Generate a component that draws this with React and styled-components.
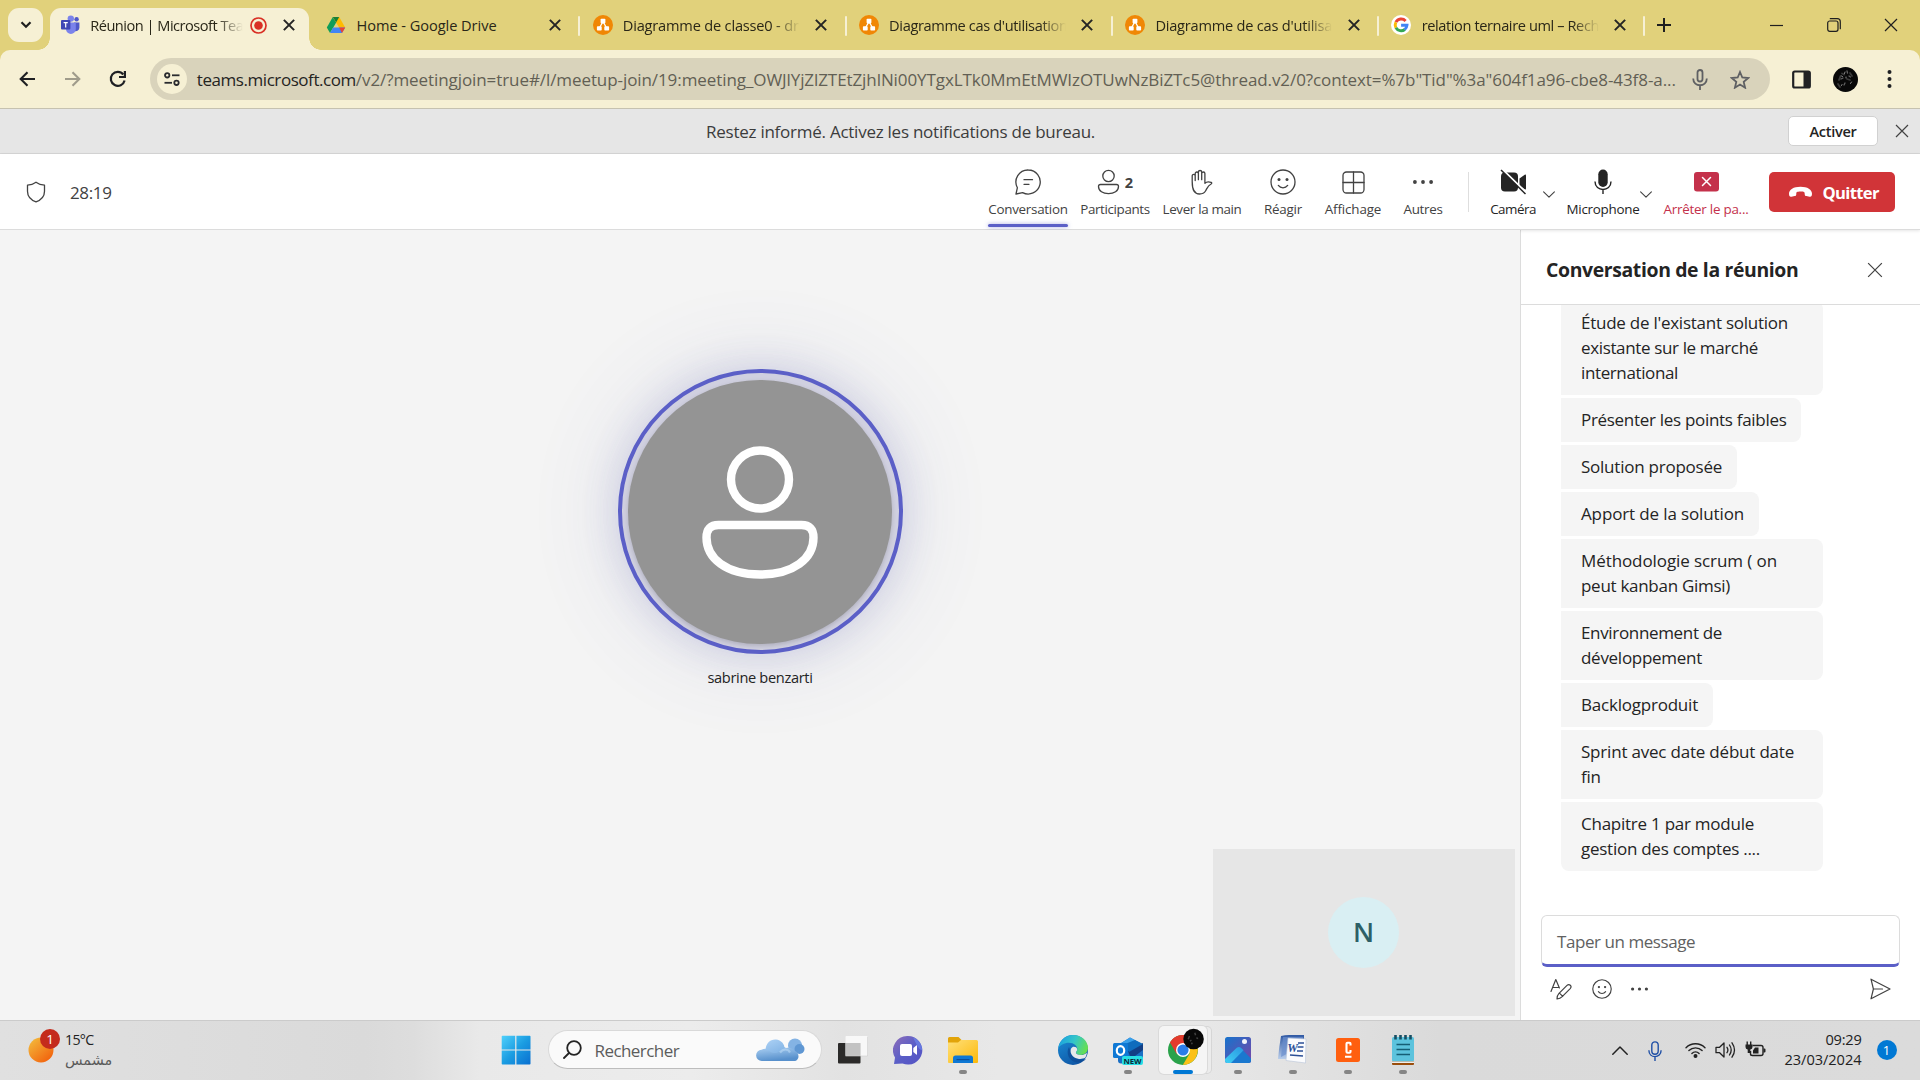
import React from 'react';
import styled, { createGlobalStyle } from 'styled-components';

const GlobalStyle = createGlobalStyle`
  * { box-sizing: border-box; }
  body { margin: 0; overflow: hidden; font-family: "Open Sans", "Noto Sans", sans-serif; color: #242424; }
  svg { display: block; flex: none; }
  button { font: inherit; color: inherit; border: 0; background: none; padding: 0; margin: 0; }
`;

const Screen = styled.div`
  width: 1920px;
  height: 1080px;
  display: flex;
  flex-direction: column;
  overflow: hidden;
  background: #fff;
`;

const Text = styled.span`
  white-space: pre;
  font-size: ${(p) => p.$size || 17}px;
  font-weight: ${(p) => p.$weight || 400};
  letter-spacing: ${(p) => p.$track || 0}px;
  color: ${(p) => p.$color || 'inherit'};
`;

/* ---------- Browser chrome ---------- */

const TabStrip = styled.div`
  height: 50px;
  flex: none;
  display: flex;
  background: #e1d17b;
  padding-left: 8px;
`;

const TabSearch = styled.button`
  width: 35px;
  height: 34px;
  margin: 8px 7px 0 0;
  border-radius: 11px;
  background: #f6f0d4;
  display: grid;
  place-items: center;
`;

const TabBox = styled.div`
  position: relative;
  width: 259px;
  flex: none;
  height: 42.5px;
  margin: 7.5px 7.3px 0 0;
  padding: 0 0 7px 10px;
  display: flex;
  align-items: center;
  border-radius: 11px 11px 0 0;
  background: ${(p) => (p.$active ? '#f6f0d4' : 'transparent')};
  ${(p) => p.$active && `
    &::before, &::after {
      content: '';
      position: absolute;
      bottom: 0;
      width: 12px;
      height: 12px;
    }
    &::before { left: -12px; background: radial-gradient(circle at 0 0, transparent 11.5px, #f6f0d4 12px); }
    &::after { right: -12px; background: radial-gradient(circle at 100% 0, transparent 11.5px, #f6f0d4 12px); }
  `}
`;

const TabIcon = styled.span`
  width: 20px;
  flex: none;
  margin-right: 10.2px;
  display: grid;
  place-items: center;
`;

const TabTitle = styled.span`
  width: ${(p) => (p.$active ? 152.5 : 177)}px;
  flex: none;
  margin-right: ${(p) => (p.$active ? 7 : 0)}px;
  line-height: 22px;
  white-space: pre;
  font-size: 14.6px;
  letter-spacing: ${(p) => p.$track}px;
  color: #2a2718;
  mask-image: ${(p) => (p.$fade ? 'linear-gradient(90deg, #000 calc(100% - 26px), transparent 100%)' : 'none')};
`;

const TabClose = styled.span`
  width: 12px;
  margin-left: auto;
  margin-right: 14.5px;
`;

const TabDivider = styled.span`
  width: 2px;
  height: 20px;
  flex: none;
  margin: 15.5px 0 0 -4.3px;
  background: #f6f0d4;
  border-radius: 1px;
`;

const TabGroup = styled.div`
  display: flex;
  width: 266.3px;
  flex: none;
`;

const WindowButtons = styled.div`
  margin-left: auto;
  display: flex;
  height: 50px;
  align-items: center;
  padding-right: 1px;
`;

const WindowButton = styled.button`
  width: 57px;
  height: 48px;
  display: grid;
  place-items: center;
`;

const NewTab = styled.button`
  width: 30px;
  height: 50px;
  margin-left: 1px;
  display: grid;
  place-items: center;
`;

const AddressRow = styled.div`
  background: #e1d17b;
  flex: none;
`;

const AddressBar = styled.div`
  height: 58px;
  border-radius: 10px 10px 0 0;
  background: #f6f0d4;
  display: flex;
  align-items: center;
  padding-left: 5px;
`;

const NavButton = styled.button`
  width: 45px;
  height: 40px;
  flex: none;
  display: grid;
  place-items: center;
`;

const Omnibox = styled.div`
  width: 1620px;
  height: 42px;
  flex: none;
  margin-left: 10px;
  border-radius: 21px;
  background: #d9d3bb;
  display: flex;
  align-items: center;
  padding-left: 6.5px;
`;

const SiteInfo = styled.span`
  width: 30px;
  height: 30px;
  flex: none;
  margin-right: 10.3px;
  border-radius: 50%;
  background: #f6f0d4;
  display: grid;
  place-items: center;
`;

const UrlText = styled.span`
  width: 1483px;
  flex: none;
  white-space: pre;
  line-height: 26px;
  padding-top: 1px;
`;

const OmniIcon = styled.span`
  width: 40px;
  display: grid;
  place-items: center;
`;

const BarIcon = styled.button`
  width: ${(p) => p.$w}px;
  height: 40px;
  display: grid;
  place-items: center;
`;

/* ---------- Teams ---------- */

const NoticeBar = styled.div`
  height: 46px;
  flex: none;
  display: grid;
  grid-template-columns: 1fr auto 25px;
  align-items: center;
  background: #e6e6e6;
  border-top: 1px solid #c6c2b0;
  border-bottom: 1px solid #d6d6d6;
`;

const NoticeText = styled.div`
  padding: 2px 0 0 706px;
  line-height: 24px;
  color: #3c3c3c;
`;

const NoticeButton = styled.button`
  width: 90px;
  height: 30px;
  margin-right: 17px;
  border: 1px solid #d1d1d1;
  border-radius: 5px;
  background: #fff;
  line-height: 28px;
`;

const MeetingBar = styled.div`
  height: 76px;
  flex: none;
  display: flex;
  background: #fff;
  border-bottom: 1px solid #dcdcdc;
  box-shadow: 0 1px 3px rgba(0, 0, 0, 0.1);
  position: relative;
`;

const CallInfo = styled.div`
  width: 976px;
  height: 76px;
  padding-left: 25.5px;
  display: flex;
  align-items: center;
  gap: 24.5px;
  color: #424242;
`;

const Action = styled.button`
  width: ${(p) => p.$w}px;
  height: 74px;
  margin-left: ${(p) => (p.$gap === undefined ? 12 : p.$gap)}px;
  flex: none;
  display: grid;
  grid-template-rows: 26px 20px 5px;
  padding-top: 15px;
  row-gap: 4px;
  line-height: 20px;
  align-content: start;
  justify-items: center;
  color: ${(p) => p.$color || '#424242'};
`;

const ActionIcon = styled.span`
  height: 26px;
  display: flex;
  align-items: center;
  gap: 5px;
`;

const ActiveLine = styled.span`
  width: 80px;
  height: 3px;
  margin-top: 1px;
  border-radius: 2px;
  background: #5b5fc7;
  box-shadow: 0 0 4px rgba(91, 95, 199, 0.55);
`;

const ActionDivider = styled.span`
  width: 1px;
  height: 40px;
  margin: 18px 0 0 16px;
  background: #dedede;
`;

const Caret = styled.button`
  width: 12px;
  height: 7px;
  margin: 37px 0 0 ${(p) => p.$gap}px;
`;

const LeaveButton = styled.button`
  width: 126px;
  height: 40px;
  margin: 18px 0 0 20px;
  padding-left: 18.5px;
  display: flex;
  align-items: center;
  gap: 10px;
  border-radius: 5px;
  background: #d13438;
  color: #fff;
`;

const Body = styled.div`
  flex: 1;
  display: flex;
  min-height: 0;
`;

const Stage = styled.main`
  position: relative;
  width: 1520px;
  background: #f4f4f4;
  display: flex;
  flex-direction: column;
  align-items: center;
  padding-top: 139px;
`;

const SpeakerRing = styled.div`
  width: 285px;
  height: 285px;
  border-radius: 50%;
  border: 4px solid #5b5fc7;
  background: #d0d0e0;
  display: grid;
  place-items: center;
  box-shadow: 0 0 36px rgba(80, 84, 170, 0.17), 0 0 90px rgba(80, 84, 160, 0.16);
`;

const SpeakerAvatar = styled.div`
  width: 264px;
  height: 264px;
  border-radius: 50%;
  background: #949494;
  box-shadow: 0 2px 5px rgba(0, 0, 0, 0.16);
  display: grid;
  place-items: center;
`;

const SpeakerName = styled.div`
  margin-top: 12px;
  line-height: 22px;
`;

const SelfTile = styled.div`
  position: absolute;
  right: 5px;
  bottom: 4px;
  width: 302px;
  height: 167px;
  background: #e6e6e6;
  display: grid;
  place-items: center;
`;

const SelfAvatar = styled.div`
  width: 71px;
  height: 71px;
  margin-right: 1px;
  border-radius: 50%;
  background: #d9eff3;
  color: #2d5f66;
  font-size: 27px;
  font-weight: 600;
  line-height: 69px;
  text-align: center;
`;

const Chat = styled.aside`
  flex: 1;
  display: flex;
  flex-direction: column;
  background: #fff;
  border-left: 1px solid #dcdcdc;
`;

const ChatHeader = styled.header`
  height: 75px;
  flex: none;
  display: flex;
  align-items: center;
  padding: 5px 37px 0 25px;
  justify-content: space-between;
  border-bottom: 1px solid #dcdcdc;
`;

const MessageList = styled.div`
  flex: 1;
  min-height: 0;
  overflow: hidden;
  padding: 0 0 44px 40px;
  display: flex;
  flex-direction: column;
  justify-content: flex-end;
  align-items: flex-start;
  gap: 3px;
`;

const Bubble = styled.div`
  flex: none;
  min-width: ${(p) => p.$w}px;
  padding: 8.5px 15px 10.5px 20px;
  border-radius: 0 8px 8px ${(p) => (p.$last ? 8 : 0)}px;
  background: #f5f5f5;
  display: flex;
  flex-direction: column;
  line-height: 25px;
`;

const Composer = styled.div`
  height: 105px;
  flex: none;
  padding: 0 20px;
`;

const MessageInput = styled.div`
  height: 52px;
  width: 359px;
  padding: 0 15px;
  border: 1px solid #dcdcdc;
  border-bottom: 3px solid #5b5fc7;
  border-radius: 6px;
  line-height: 52px;
  color: #616161;
`;

const ComposerTools = styled.div`
  display: flex;
  align-items: center;
  height: 44px;
  padding: 0 9px 0 9px;
  gap: 19.5px;
  color: #424242;
`;

const SendButton = styled.button`
  margin-left: auto;
`;

/* ---------- Taskbar ---------- */

const Taskbar = styled.footer`
  height: 60px;
  flex: none;
  display: flex;
  border-top: 1px solid #cbcbcb;
  background: linear-gradient(90deg, #e0e0e0 0, #dadada 19%, #dddddd 21.5%, #e9e9e9 25%, #ececec 36%, #e2e2e2 44%, #e8e8e8 52%, #e8e8e8 62%, #dadada 75%, #dbdbdb 100%);
`;

const Weather = styled.div`
  width: 488px;
  padding: 7px 0 0 28px;
  display: flex;
  gap: 5px;
`;

const WeatherText = styled.div`
  display: flex;
  flex-direction: column;
  padding-top: 2px;
`;

const WeatherState = styled.span`
  font-family: "DejaVu Sans", sans-serif;
  font-size: 14.4px;
  line-height: 22px;
  color: #5a5a5a;
`;

const SearchPill = styled.div`
  width: 274px;
  height: 39px;
  margin: 9px 3px 0 5px;
  padding: 0 16px 0 14px;
  border-radius: 20px;
  background: #fafafa;
  border: 1px solid #d9d9d9;
  border-bottom-color: #bdbdbd;
  display: flex;
  align-items: center;
  color: #5c5c5c;
`;

const SearchLabel = styled.span`
  margin-left: 12.5px;
  padding-top: 2px;
  flex: 1;
  line-height: 24px;
`;

const AppCell = styled.div`
  width: 48px;
  height: 48px;
  margin: 5px 3.5px 0;
  padding-top: 8.5px;
  display: flex;
  flex-direction: column;
  align-items: center;
  gap: 5px;
  border-radius: 5px;
  background: ${(p) => (p.$active ? '#f5f5f5' : 'transparent')};
  box-shadow: ${(p) => (p.$active ? '0 0 0 1px #dadada, 5px 0 0 -1px #ececec, 5px 0 0 0 #d6d6d6' : 'none')};
`;

const RunMark = styled.span`
  width: ${(p) => (p.$active ? 20 : 8)}px;
  height: 4px;
  flex: none;
  border-radius: 2px;
  background: ${(p) => (p.$active ? '#0078d4' : '#858585')};
`;

const Tray = styled.div`
  margin-left: auto;
  width: 308px;
  display: flex;
  align-items: center;
`;

const TrayIcon = styled.span`
  margin: ${(p) => p.$rise || 0}px ${(p) => p.$gap}px 0 0;
`;

const Clock = styled.div`
  width: 96px;
  padding-bottom: 3px;
  display: flex;
  flex-direction: column;
  align-items: flex-end;
  line-height: 20px;
  color: #222;
`;

const NoticeCount = styled.span`
  width: 20px;
  height: 20px;
  margin: -2px 0 0 15px;
  border-radius: 50%;
  background: #0078d4;
  color: #fff;
  font-size: 13px;
  line-height: 20px;
  text-align: center;
`;

/* ---------- Icons ---------- */

const stroke = { fill: 'none', stroke: 'currentColor', strokeLinecap: 'round', strokeLinejoin: 'round' };

const Cross = ({ size, width = 1.2, color = '#242424' }) => (
  <svg width={size} height={size} viewBox="0 0 14 14">
    <path d="M1 1l12 12M13 1L1 13" stroke={color} strokeWidth={(width * 14) / size} />
  </svg>
);

const TeamsLogo = () => (
  <svg width="20" height="20" viewBox="0 0 20 20">
    <circle cx="16.6" cy="4.3" r="2.2" fill="#5059c9" />
    <path d="M14 7.5h5.4v5.2a3.6 3.6 0 0 1-5.4 3z" fill="#5059c9" />
    <circle cx="10.8" cy="3.6" r="3.2" fill="#7b83eb" />
    <path d="M6 7.5h9.8v6.6a4.9 4.9 0 0 1-9.8 0z" fill="#7b83eb" />
    <rect x="1" y="5" width="9.4" height="9.4" rx="1" fill="#4048b5" />
    <path d="M3.6 7.6h4.2M5.7 7.6v4.8" stroke="#fff" strokeWidth="1.2" />
  </svg>
);

const DriveLogo = () => (
  <svg width="20" height="18" viewBox="0 0 20 18">
    <path d="M6.8 1L.8 11.6 4 17l6.2-10.6z" fill="#0f9d58" />
    <path d="M6.8 1h6.4l6 10.6h-6.1z" fill="#ffba00" />
    <path d="M4 17l3.1-5.4h12.1L16 17z" fill="#4285f4" />
    <path d="M13.1 11.6h6.1L16 17z" fill="#ea4335" />
    <path d="M6.8 1h6.4L10.1 6.4z" fill="#188038" />
  </svg>
);

const DrawioLogo = () => (
  <svg width="20" height="20" viewBox="0 0 20 20">
    <circle cx="10" cy="10" r="10" fill="#f08705" />
    <path d="M10 6.5L6.4 13M10 6.5l3.6 6.5" stroke="#fff" strokeWidth="1.3" />
    <rect x="7.6" y="3.8" width="4.8" height="4.6" rx=".8" fill="#fff" />
    <rect x="3.9" y="11.2" width="4.8" height="4.4" rx=".8" fill="#fff" />
    <rect x="11.3" y="11.2" width="4.8" height="4.4" rx=".8" fill="#fff" />
  </svg>
);

const GoogleLogo = () => (
  <svg width="20" height="20" viewBox="0 0 20 20">
    <circle cx="10" cy="10" r="10" fill="#fff" />
    <g fill="none" strokeWidth="2.9">
      <path d="M14.6 5.9A6 6 0 0 0 4.9 7.2" stroke="#ea4335" />
      <path d="M4.9 7.2a6 6 0 0 0 0 5.6" stroke="#fbbc05" />
      <path d="M4.9 12.8a6 6 0 0 0 8.9 1.7" stroke="#34a853" />
      <path d="M13.6 14.6A6 6 0 0 0 16 10.2h-5.9" stroke="#4285f4" />
    </g>
  </svg>
);

const RecordIcon = () => (
  <svg width="17" height="17" viewBox="0 0 17 17">
    <circle cx="8.5" cy="8.5" r="7.5" fill="none" stroke="#d93025" strokeWidth="1.7" />
    <circle cx="8.5" cy="8.5" r="4.3" fill="#d93025" />
  </svg>
);

const SmileIcon = ({ size }) => (
  <svg width={size} height={size} viewBox="0 0 26 26" {...stroke} strokeWidth={size > 22 ? 1.3 : 1.5}>
    <circle cx="13" cy="13" r="12" />
    <path d="M8.3 16.4c2.4 3.2 7 3.2 9.4 0" />
    <circle cx="9" cy="10.5" r="1.5" fill="currentColor" stroke="none" />
    <circle cx="17" cy="10.5" r="1.5" fill="currentColor" stroke="none" />
  </svg>
);

const DotsIcon = ({ w, r }) => (
  <svg width={w} height="6" viewBox={`0 0 ${w} 6`} fill="currentColor">
    <circle cx={r} cy="3" r={r} />
    <circle cx={w / 2} cy="3" r={r} />
    <circle cx={w - r} cy="3" r={r} />
  </svg>
);

const CaretIcon = () => (
  <svg width="12" height="7" viewBox="0 0 12 7" {...stroke} strokeWidth="1.1" color="#424242">
    <path d="M.6.8L6 6.2 11.4.8" />
  </svg>
);

const ProfilePhoto = ({ size }) => (
  <svg width={size} height={size} viewBox="0 0 25 25">
    <circle cx="12.5" cy="12.5" r="12.5" fill="#080808" />
    <g fill="none" strokeLinecap="round">
      <path d="M6 13l1.500-4M9 6.500l2 1M5 17l2 3M17 6l2 3M14 12l3 1" stroke="#3a3a3a" strokeWidth="1.800" />
      <path d="M8 12l2-1M14 4l.5 2M16 9l1.500 1M11 18l1-2" stroke="#626262" strokeWidth="1.300" />
      <path d="M12 5l-.5 1.500M8.500 9l1 .5M18.500 15l-1 1.500M9 17.500l-.5 1M13 10v1" stroke="#9a9a9a" strokeWidth=".9" />
    </g>
  </svg>
);

const MicTray = () => (
  <svg width="14" height="20" viewBox="0 0 14 20" fill="none" stroke="#1f4fa5" strokeWidth="1.4">
    <rect x="3.8" y=".9" width="6.4" height="12.4" rx="3.2" />
    <path d="M.9 9.2c0 8.6 12.2 8.6 12.2 0M7 15.8V20" />
  </svg>
);

const WindowsLogo = () => (
  <svg width="30" height="30" viewBox="0 0 30 30">
    <defs>
      <linearGradient id="win" x1="0" y1="0" x2="1" y2="1" gradientUnits="objectBoundingBox">
        <stop offset="0" stopColor="#4fd0fb" />
        <stop offset=".5" stopColor="#1b9de2" />
        <stop offset="1" stopColor="#0a6fd0" />
      </linearGradient>
    </defs>
    <path fill="url(#win)" d="M1.5.8h12.7v13.7H.7V1.6q0-.8.8-.8zM15.4.8h13.3q.8 0 .8.8v12.9H15.4zM.7 15.6h13.5v13.9H1.5q-.8 0-.8-.8zM15.4 15.6h14.1v13.1q0 .8-.8.8H15.4z" />
  </svg>
);

const CloudArt = () => (
  <svg width="50" height="24" viewBox="0 0 50 24">
    <defs>
      <linearGradient id="cloud" x1="0" y1="0" x2="0.3" y2="1">
        <stop offset="0" stopColor="#b5d7f7" />
        <stop offset="1" stopColor="#5790cc" />
      </linearGradient>
      <linearGradient id="cloudTop" x1="0" y1="0" x2="0.6" y2="1">
        <stop offset="0" stopColor="#acd1f5" />
        <stop offset="1" stopColor="#86b6e6" />
      </linearGradient>
    </defs>
    <circle cx="40" cy="7.5" r="7" fill="#84b3e4" />
    <circle cx="44.500" cy="11" r="5" fill="#5f97d3" />
    <path d="M7 23a5.600 5.600 0 0 1-.5-11.200C8 10.800 10 10.600 12 11 18 8 26 6 31 10c4-1 7 1 8 3 6 .5 6 10 0 10z" fill="url(#cloud)" />
    <path d="M10.500 12c.5-7 5-11 10.500-10.500 5 .4 9 4.600 8.500 9.500-5 1-6 4.500-10 4-4-.4-5-2.500-9-3z" fill="url(#cloudTop)" />
    <path d="M25 14.500c3-4 8-4 10 0" stroke="#b9d8f5" strokeWidth="2.200" fill="none" opacity=".6" />
  </svg>
);

const TaskViewIcon = () => (
  <svg width="30" height="30" viewBox="0 0 30 30">
    <rect x="0" y="8" width="22.500" height="20.500" rx="1" fill="#2b2a29" />
    <rect x="7.500" y="1" width="22" height="20" rx="1" fill="#fafafa" opacity=".92" />
    <path d="M7.500 8h15v13h-15z" fill="#c2c2c2" />
    <path d="M29.500 2v19h-22" fill="none" stroke="#d0d0d0" strokeWidth=".6" />
  </svg>
);

const ChatIcon = () => (
  <svg width="30" height="30" viewBox="0 0 30 30">
    <defs>
      <linearGradient id="chat" x1="0" y1="0" x2="1" y2="1">
        <stop offset="0" stopColor="#8f6db8" />
        <stop offset=".5" stopColor="#5b5fc7" />
        <stop offset="1" stopColor="#5351c4" />
      </linearGradient>
    </defs>
    <path d="M15 1a14.300 14.300 0 1 1-5.500 27.500L1 29l1-6.500A14.300 14.300 0 0 1 15 1z" fill="url(#chat)" />
    <path d="M20 2.200A14 14 0 0 1 29.300 15c-3 1-6-6-9.300-12.800z" fill="#6f8cf0" opacity=".6" />
    <rect x="7" y="9" width="12" height="12" rx="2" fill="#fff" />
    <path d="M20.300 13l3-2.600q.7-.4.7.4v8.400q0 .8-.7.4l-3-2.600z" fill="#fff" />
  </svg>
);

const ExplorerIcon = () => (
  <svg width="30" height="30" viewBox="0 0 30 30">
    <defs>
      <linearGradient id="folder" x1="0" y1="0" x2="1" y2="1">
        <stop offset="0" stopColor="#ffe07a" />
        <stop offset="1" stopColor="#fcb90a" />
      </linearGradient>
    </defs>
    <path d="M0 3.500Q0 2 1.500 2h9l3 3H28v8H0z" fill="#e2a40a" />
    <path d="M0 7.500h10L13 5h15.500Q30 5 30 6.500V27q0 1-1 1H1q-1 0-1-1z" fill="url(#folder)" />
    <path d="M5 28v-5q0-2.500 2.500-2.500h15Q25 20.500 25 23v5z" fill="#0f78d4" />
    <path d="M8.500 24.600h13" stroke="#0b4f9c" strokeWidth="1.200" />
  </svg>
);

const EdgeIcon = () => (
  <svg width="30" height="30" viewBox="0 0 30 30">
    <defs>
      <linearGradient id="edgeTop" x1="0" y1=".3" x2="1" y2=".6">
        <stop offset="0" stopColor="#1ba1e0" />
        <stop offset=".5" stopColor="#34c6c8" />
        <stop offset="1" stopColor="#68e04c" />
      </linearGradient>
      <linearGradient id="edgeLow" x1="0" y1="0" x2=".6" y2="1">
        <stop offset="0" stopColor="#1b8fd8" />
        <stop offset="1" stopColor="#0f56a5" />
      </linearGradient>
    </defs>
    <circle cx="15" cy="15" r="15" fill="url(#edgeLow)" />
    <path d="M.2 13.500C1.500 5 8 0 15 0c8.500 0 15 6 15 12.800 0 4.500-3.500 7.200-7 7.200-3.500 0-5-1.500-5-2.600 0-.9 1.300-1.300 1.300-3.400 0-3-3.300-6.200-8.300-6.200C6 7.800 1.800 10.300.2 13.500z" fill="url(#edgeTop)" />
    <path d="M11 12c-3.500 6 0 14.500 8 15.500 4 .3 7-1 9-3.500C22 26.500 13 23 12.600 16z" fill="#0d4a94" opacity=".75" />
    <path d="M12.600 16c0-2 1-3.600 2.400-4.200 2-.3 4 .5 4.200 2.400 0 1.800-1.300 2.300-1.300 3.300 0 1.200 1.500 2.600 5 2.600 2.700 0 4.900-1.200 6-2.600-.2 2-.6 3.300-1.500 5-1.800 1.200-4 1.600-6.400 1.400-5-.5-8.400-4-8.400-7.900z" fill="#e6e8ea" />
  </svg>
);

const OutlookIcon = () => (
  <svg width="30" height="30" viewBox="0 0 30 30">
    <path d="M5 10L17 2.500 30 9.500v16q0 3-3 3H8q-3 0-3-3z" fill="#1a6fc4" />
    <path d="M5 10L17 2.500l6 3L9 13z" fill="#3aa0ea" />
    <path d="M15 16L30 8v7l-12 9z" fill="#123f86" />
    <path d="M12 9l10-4 8 4-14 8z" fill="#0f6cbd" />
    <rect x="0" y="8" width="15" height="15" rx="1.500" fill="#0f78d4" />
    <ellipse cx="7.500" cy="15.500" rx="3.700" ry="4.300" fill="none" stroke="#fff" strokeWidth="2.200" />
    <rect x="9" y="21" width="21" height="9" rx="2" fill="#27dfe4" />
    <text x="19.500" y="28.600" fontSize="7.800" fontWeight="700" fontFamily="Open Sans" textAnchor="middle" fill="#0c2b3a">NEW</text>
  </svg>
);

const ChromeIcon = () => (
  <svg width="36" height="30" viewBox="-3 0 36 30" overflow="visible">
    <circle cx="15" cy="15" r="15" fill="#2aa24a" />
    <path d="M15 15L2 7.500A15 15 0 0 1 28 7.500z" fill="#e33b2e" />
    <path d="M2 7.500L8.500 18.800 15 15V8H28A15 15 0 0 0 2 7.500z" fill="#e33b2e" />
    <path d="M28 7.800A15 15 0 0 1 14.800 30l6.700-11.300L20 8z" fill="#fbc116" />
    <circle cx="15" cy="15" r="7" fill="#fff" />
    <circle cx="15" cy="15" r="5.600" fill="#2b7de9" />
    <g transform="translate(15.300 -6.300) scale(.82)">
      <circle cx="12.500" cy="12.500" r="12.500" fill="#080808" />
      <path d="M6 13l1.500-4M14 5l1 3M16 11l2 1M10 19l1-2M8 15l2-1" stroke="#404040" strokeWidth="1.800" fill="none" />
    </g>
  </svg>
);

const PhotosIcon = () => (
  <svg width="30" height="30" viewBox="0 0 30 30">
    <defs>
      <linearGradient id="photo" x1="0" y1="0" x2="1" y2="1">
        <stop offset="0" stopColor="#1673cc" />
        <stop offset="1" stopColor="#7a45a8" />
      </linearGradient>
      <linearGradient id="peak" x1="0" y1="1" x2="1" y2="0">
        <stop offset="0" stopColor="#3fd0f5" />
        <stop offset="1" stopColor="#2a96e0" />
      </linearGradient>
      <clipPath id="photoClip"><rect x="2" y="2" width="26" height="26" rx="2.500" /></clipPath>
    </defs>
    <g clipPath="url(#photoClip)">
      <rect x="2" y="2" width="26" height="26" fill="url(#photo)" />
      <path d="M5 28l8.500-14.500q2.500-2 4.700 0L29 24.500V28z" fill="#1a78cf" />
      <path d="M2 24l11.500-11q2.500-2 4.700 0l2.300 2.300L8 28H2z" fill="url(#peak)" />
    </g>
    <circle cx="21.500" cy="6.500" r="2.500" fill="#f2f4fb" />
  </svg>
);

const WordIcon = () => (
  <svg width="30" height="30" viewBox="0 0 30 30">
    <defs>
      <linearGradient id="word" x1="0" y1="0" x2="0" y2="1">
        <stop offset="0" stopColor="#2f58a3" />
        <stop offset="1" stopColor="#b9cdea" />
      </linearGradient>
    </defs>
    <path d="M3 1q4-1 8-1h15v24H0Q1 12 3 1z" fill="url(#word)" />
    <path d="M5 2h20v8L3 22z" fill="#6b8fcd" opacity=".7" />
    <path d="M10 3l18 1-.5 24L8 25.500z" fill="#fafbfd" stroke="#b9c4d8" strokeWidth=".6" />
    <path d="M20 8h6M19.500 12h6M19 16h6M12 20l13 1" stroke="#2b4f96" strokeWidth="1.700" />
    <text x="14.500" y="16.500" fontSize="12" fontWeight="700" fontStyle="italic" fontFamily="Liberation Serif" textAnchor="middle" fill="#2b4f96">W</text>
  </svg>
);

const CalameoIcon = () => (
  <svg width="30" height="30" viewBox="0 0 30 30">
    <rect x="3" y="3" width="24" height="24" rx="2.500" fill="#ff5f0f" />
    <path d="M17.500 10.500V8.700q0-1-1-1h-2q-1 0-1 1v8.100q0 1 1 1h2q1 0 1-1V15M12 21.700h6.500" fill="none" stroke="#fff" strokeWidth="2.100" />
  </svg>
);

const NotepadIcon = () => (
  <svg width="30" height="30" viewBox="0 0 30 30">
    <rect x="4" y="26" width="22" height="4" rx="1" fill="#9a4d0b" />
    <rect x="4" y="2" width="22" height="24.500" rx="1.500" fill="#5cc3dd" />
    <path d="M4 26.500h22V28H4z" fill="#eee" />
    <path d="M8.500 9.500h13.500M8.500 14.500h13.500M8.500 19.500h13.500" stroke="#155e75" strokeWidth="1.600" />
    <path d="M7.500 0v4.500M12.500 0v4.500M17.500 0v4.500M22.500 0v4.500" stroke="#164e63" strokeWidth="2.600" />
  </svg>
);

/* ---------- Data ---------- */

const tabs = [
  { title: 'Réunion | Microsoft Tea', track: -0.5, icon: TeamsLogo, active: true },
  { title: 'Home - Google Drive', track: -0.05, icon: DriveLogo, plain: true },
  { title: 'Diagramme de classe0 - dr', track: -0.19, icon: DrawioLogo },
  { title: "Diagramme cas d'utilisation", track: -0.36, icon: DrawioLogo },
  { title: "Diagramme de cas d'utilisa", track: -0.22, icon: DrawioLogo },
  { title: 'relation ternaire uml – Rech', track: -0.4, icon: GoogleLogo },
];

const messages = [
  { w: 262, lines: [["Étude de l'existant solution", -0.25], ['existante sur le marché', -0.36], ['international', -0.38]] },
  { w: 240, lines: [['Présenter les points faibles', -0.3]] },
  { w: 176, lines: [['Solution proposée', -0.24]] },
  { w: 198, lines: [['Apport de la solution', -0.13]] },
  { w: 262, lines: [['Méthodologie scrum ( on', -0.09], ['peut kanban Gimsi)', -0.285]] },
  { w: 262, lines: [['Environnement de', -0.335], ['développement', -0.28]] },
  { w: 152, lines: [['Backlogproduit', -0.215]] },
  { w: 262, lines: [['Sprint avec date début date', -0.2], ['fin', -0.2]] },
  { w: 262, lines: [['Chapitre 1 par module', -0.25], ['gestion des comptes ....', -0.26]], last: true },
];

const apps = [
  { icon: TaskViewIcon }, { icon: ChatIcon }, { icon: ExplorerIcon, running: true }, {},
  { icon: EdgeIcon }, { icon: OutlookIcon, running: true }, { icon: ChromeIcon, running: true, active: true },
  { icon: PhotosIcon, running: true }, { icon: WordIcon, running: true },
  { icon: CalameoIcon, running: true }, { icon: NotepadIcon, running: true },
];

/* ---------- Sections ---------- */

function BrowserTab({ tab, divider }) {
  const Icon = tab.icon;
  return (
    <TabGroup>
      <TabBox $active={tab.active}>
        <TabIcon><Icon /></TabIcon>
        <TabTitle $active={tab.active} $track={tab.track} $fade={!tab.plain}>{tab.title}</TabTitle>
        {tab.active && <RecordIcon />}
        <TabClose><Cross size={12} width={2} /></TabClose>
      </TabBox>
      {divider && <TabDivider />}
    </TabGroup>
  );
}

function Browser() {
  return (
    <>
      <TabStrip>
        <TabSearch>
          <svg width="12" height="8" viewBox="0 0 12 8"><path d="M1.500 1.300L6 5.800l4.500-4.500" fill="none" stroke="#1f1f1f" strokeWidth="2.200" /></svg>
        </TabSearch>
        {tabs.map((tab, i) => <BrowserTab key={i} tab={tab} divider={i > 0} />)}
        <NewTab>
          <svg width="14" height="14" viewBox="0 0 14 14"><path d="M7 0v14M0 7h14" stroke="#1f1f1f" strokeWidth="2" /></svg>
        </NewTab>
        <WindowButtons>
          <WindowButton><svg width="13" height="13" viewBox="0 0 13 13"><path d="M0 6.500h13" stroke="#1f1f1f" strokeWidth="1.200" /></svg></WindowButton>
          <WindowButton>
            <svg width="14" height="14" viewBox="0 0 14 14" {...stroke} strokeWidth="1.200" color="#1f1f1f">
              <rect x=".7" y="3" width="10.300" height="10.300" rx="2" /><path d="M3.300.7h7q3 0 3 3v7" />
            </svg>
          </WindowButton>
          <WindowButton><Cross size={14} width={1.2} color="#1f1f1f" /></WindowButton>
        </WindowButtons>
      </TabStrip>
      <AddressRow>
        <AddressBar>
          <NavButton><svg width="17" height="16" viewBox="0 0 17 16"><path d="M16 8H2M8.500 1.200L1.700 8l6.800 6.800" fill="none" stroke="#1f2023" strokeWidth="2.100" /></svg></NavButton>
          <NavButton><svg width="17" height="16" viewBox="0 0 17 16"><path d="M1 8h14M8.500 1.200L15.300 8l-6.800 6.800" fill="none" stroke="#a09c8b" strokeWidth="2.100" /></svg></NavButton>
          <NavButton><svg width="18" height="18" viewBox="0 0 18 18"><path d="M15.600 10.500A7 7 0 1 1 14.300 4.500" fill="none" stroke="#1f2023" strokeWidth="2.200" /><path d="M17 1v7h-7V6h4.800V1z" fill="#1f2023" /></svg></NavButton>
          <Omnibox>
            <SiteInfo>
              <svg width="16" height="14" viewBox="0 0 16 14" fill="none" stroke="#2a2b2e" strokeWidth="1.800">
                <circle cx="3.200" cy="3.300" r="2.200" /><path d="M8 3.300h7.500" /><circle cx="12.500" cy="10.800" r="2.200" /><path d="M.5 10.800H8" />
              </svg>
            </SiteInfo>
            <UrlText>
              <Text $track={-0.44} $color="#25241f">teams.microsoft.com</Text>
              <Text $track={-0.082} $color="#625f54">/v2/?meetingjoin=true#/l/meetup-join/19:meeting_OWJlYjZlZTEtZjhlNi00YTgxLTk0MmEtMWIzOTUwNzBiZTc5@thread.v2/0?context=%7b"Tid"%3a"604f1a96-cbe8-43f8-a...</Text>
            </UrlText>
            <OmniIcon>
              <svg width="16" height="21" viewBox="0 0 16 21" fill="none" stroke="#5f6063" strokeWidth="1.800">
                <rect x="5.500" y="1" width="5" height="11.500" rx="2.500" /><path d="M1.200 9.500c0 9 13.600 9 13.600 0M8 16.300V21" />
              </svg>
            </OmniIcon>
            <OmniIcon>
              <svg width="20" height="19" viewBox="0 0 20 19"><path d="M10 2l2.300 5.500 5.900.5-4.500 3.900 1.400 5.800L10 14.600l-5.100 3.100 1.400-5.800L1.800 8l5.900-.5z" fill="none" stroke="#5f6063" strokeWidth="1.800" /></svg>
            </OmniIcon>
          </Omnibox>
          <BarIcon $w={64}>
            <svg width="19" height="19" viewBox="0 0 19 19"><rect x="1.200" y="1.500" width="16.600" height="16" rx="1.500" fill="none" stroke="#1f2023" strokeWidth="2.200" /><path d="M11.500 1h6.500v17h-6.500z" fill="#1f2023" /></svg>
          </BarIcon>
          <BarIcon $w={27}><ProfilePhoto size={25} /></BarIcon>
          <BarIcon $w={62}>
            <svg width="5" height="18" viewBox="0 0 5 18" fill="#1f2023"><circle cx="2.500" cy="2" r="2" /><circle cx="2.500" cy="9" r="2" /><circle cx="2.500" cy="16" r="2" /></svg>
          </BarIcon>
        </AddressBar>
      </AddressRow>
    </>
  );
}

const label = (text, track) => <Text $size={13.4} $track={track}>{text}</Text>;

function MeetingToolbar() {
  return (
    <MeetingBar>
      <CallInfo>
        <svg width="20" height="22" viewBox="0 0 20 22" {...stroke} strokeWidth="1.300"><path d="M10 1.200c2.600 2 5.300 2.700 8.500 2.900v6.100c0 5-3 8.600-8.500 10.600-5.500-2-8.500-5.600-8.500-10.600V4.100c3.200-.2 5.900-.9 8.500-2.900z" /></svg>
        <Text $track={-0.37}>28:19</Text>
      </CallInfo>
      <Action $w={80}>
        <ActionIcon>
          <svg width="26" height="26" viewBox="0 0 26 26" {...stroke} strokeWidth="1.300"><path d="M13.300 1A12 12 0 1 1 7.600 23.600L1 25l1.400-6.300A12 12 0 0 1 13.300 1zM9 10.700h8.500M9 15.300h5" /></svg>
        </ActionIcon>
        {label('Conversation', -0.26)}
        <ActiveLine />
      </Action>
      <Action $w={70}>
        <ActionIcon>
          <svg width="23" height="26" viewBox="0 0 23 26" {...stroke} strokeWidth="1.300"><circle cx="11.500" cy="7" r="5.700" /><path d="M3.500 15.500h16q2 0 2 2c0 4.500-4.500 7.200-10 7.200s-10-2.700-10-7.200q0-2 2-2z" /></svg>
          <Text $size={14.6} $weight={700}>2</Text>
        </ActionIcon>
        {label('Participants', -0.37)}
      </Action>
      <Action $w={80}>
        <ActionIcon>
          <svg width="22" height="26" viewBox="0 0 22 26" {...stroke} strokeWidth="1.300"><path d="M1.200 12.500V6.800c0-2 3-2 3 0v4.700-7c0-2 3.200-2 3.200 0v6.200V3c0-2 3.300-2 3.300 0v7.700V4.500c0-2 3.200-2 3.200 0v9.800c1.500-1.600 3.500-2 6.300-.9.800.4.600 1.300-.1 1.600-3.400 1.500-3.800 4-5.600 7-1.300 2.200-3 3-6 3-5 0-7.300-3.300-7.300-12.500z" /></svg>
        </ActionIcon>
        {label('Lever la main', -0.34)}
      </Action>
      <Action $w={58}><ActionIcon><SmileIcon size={26} /></ActionIcon>{label('Réagir', -0.22)}</Action>
      <Action $w={58}>
        <ActionIcon>
          <svg width="23" height="23" viewBox="0 0 23 23" {...stroke} strokeWidth="1.300"><rect x="1" y="1" width="21" height="21" rx="3.500" /><path d="M11.500 1v21M1 11.500h21" /></svg>
        </ActionIcon>
        {label('Affichage', -0.13)}
      </Action>
      <Action $w={58}><ActionIcon><DotsIcon w={20} r={1.9} /></ActionIcon>{label('Autres', -0.3)}</Action>
      <ActionDivider />
      <Action $w={58} $gap={15} $color="#242424">
        <ActionIcon>
          <svg width="27" height="26" viewBox="0 0 27 26">
            <rect x="1" y="3.500" width="17" height="19" rx="4" fill="#242424" /><path d="M19.500 9.500l5.200-3.800q1.300-.8 1.300.8v13q0 1.600-1.300.8l-5.200-3.800z" fill="#242424" />
            <path d="M2.500.5l24.500 24" stroke="#fff" strokeWidth="2" /><path d="M1 1l24.500 24" stroke="#242424" strokeWidth="1.500" />
          </svg>
        </ActionIcon>
        {label('Caméra', -0.5)}
      </Action>
      <Caret $gap={1}><CaretIcon /></Caret>
      <Action $w={74} $gap={11} $color="#242424">
        <ActionIcon>
          <svg width="18" height="26" viewBox="0 0 18 26"><rect x="4.300" y=".5" width="9.400" height="17.500" rx="4.700" fill="#242424" /><path d="M1 12.500c0 10.600 16 10.600 16 0M9 20.500V25" fill="none" stroke="#242424" strokeWidth="1.400" /></svg>
        </ActionIcon>
        {label('Microphone', -0.26)}
      </Action>
      <Caret $gap={0}><CaretIcon /></Caret>
      <Action $w={86} $gap={11} $color="#c4314b">
        <ActionIcon>
          <svg width="25" height="20" viewBox="0 0 25 20"><rect width="25" height="19.500" rx="3" fill="#c4314b" /><path d="M8.500 5.500l8 8M16.500 5.500l-8 8" stroke="#fff" strokeWidth="1.500" strokeLinecap="round" /></svg>
        </ActionIcon>
        {label('Arrêter le pa...', -0.24)}
      </Action>
      <LeaveButton>
        <svg width="25" height="12" viewBox="0 0 25 12"><path d="M12.500.8c7 0 11.500 2.800 11.500 7 0 2.300-.8 3.200-2.400 2.900l-3.200-.6c-1.300-.3-1.700-.9-1.700-2.200 0-1.600-.5-2.300-4.200-2.300s-4.200.7-4.200 2.300c0 1.300-.4 1.900-1.700 2.200l-3.200.6C1.800 11 1 10.100 1 7.800c0-4.200 4.500-7 11.500-7z" fill="#fff" /></svg>
        <Text $size={16.6} $weight={700} $track={-0.66}>Quitter</Text>
      </LeaveButton>
    </MeetingBar>
  );
}

function ChatPanel() {
  return (
    <Chat>
      <ChatHeader>
        <Text $size={19.4} $weight={700} $track={-0.36}>Conversation de la réunion</Text>
        <Cross size={16} width={1.2} color="#424242" />
      </ChatHeader>
      <MessageList>
        {messages.map((m, i) => (
          <Bubble key={i} $w={m.w} $last={m.last}>
            {m.lines.map(([text, track]) => <Text key={text} $track={track}>{text}</Text>)}
          </Bubble>
        ))}
      </MessageList>
      <Composer>
        <MessageInput><Text $track={-0.44}>Taper un message</Text></MessageInput>
        <ComposerTools>
          <svg width="22" height="22" viewBox="0 0 22 22" {...stroke} strokeWidth="1.200">
            <path d="M1 13.500L5.800 1.500l3.600 8.500M2.600 9.500h6" />
            <path d="M7 21c.1-2.500.6-4.200 2-5.600l8-8c2.300-2.200 5.400.8 3.200 3.200l-8 8C10.800 20 9.300 20.700 7 21zM9.500 15.200l3.200 3.200" />
          </svg>
          <SmileIcon size={20} />
          <DotsIcon w={17} r={1.6} />
          <SendButton>
            <svg width="21" height="22" viewBox="0 0 21 22" {...stroke} strokeWidth="1.200" color="#424242"><path d="M1 1.200L20 11 1 20.800 3.400 11zM3.400 11H12.500" /></svg>
          </SendButton>
        </ComposerTools>
      </Composer>
    </Chat>
  );
}

function WindowsTaskbar() {
  return (
    <Taskbar>
      <Weather>
        <svg width="32" height="36" viewBox="0 0 32 36">
          <defs><linearGradient id="sun" x1=".1" y1=".1" x2=".8" y2=".9"><stop offset="0" stopColor="#f3b63a" /><stop offset="1" stopColor="#f2660f" /></linearGradient></defs>
          <circle cx="13" cy="22" r="12.500" fill="url(#sun)" />
          <circle cx="22" cy="11" r="10" fill="#c42b1c" />
          <text x="22" y="16" fontSize="13.500" fontFamily="Open Sans" textAnchor="middle" fill="#fff">1</text>
        </svg>
        <WeatherText>
          <Text $size={14.2} $track={-0.7} $color="#222">15°C</Text>
          <WeatherState>مشمس</WeatherState>
        </WeatherText>
      </Weather>
      <AppCell><WindowsLogo /></AppCell>
      <SearchPill>
        <svg width="19" height="19" viewBox="0 0 19 19" fill="none" stroke="#242424" strokeWidth="1.800" strokeLinecap="round"><circle cx="11" cy="8" r="6.800" /><path d="M6 13l-5 5" /></svg>
        <SearchLabel><Text $track={-0.56}>Rechercher</Text></SearchLabel>
        <CloudArt />
      </SearchPill>
      {apps.map(({ icon: Icon, running, active }, i) => (
        <AppCell key={i} $active={active}>
          {Icon && <Icon />}
          {running && <RunMark $active={active} />}
        </AppCell>
      ))}
      <Tray>
        <TrayIcon $gap={20}><svg width="16" height="9" viewBox="0 0 16 9" {...stroke} strokeWidth="1.500" color="#222"><path d="M.8 8.200L8 1l7.200 7.200" /></svg></TrayIcon>
        <TrayIcon $gap={22.5}><MicTray /></TrayIcon>
        <TrayIcon $gap={9} $rise={-2}>
          <svg width="21" height="16" viewBox="0 0 21 16" {...stroke} strokeWidth="1.400" color="#222">
            <path d="M1 5.700a13.500 13.500 0 0 1 19 0M3.900 8.600a9.400 9.400 0 0 1 13.200 0M6.900 11.400a5.200 5.200 0 0 1 7.200 0" /><circle cx="10.500" cy="14" r="1.300" fill="#222" />
          </svg>
        </TrayIcon>
        <TrayIcon $gap={9} $rise={-1}>
          <svg width="21" height="18" viewBox="0 0 21 18" {...stroke} strokeWidth="1.300" color="#222">
            <path d="M1 6.300h3.600L9 2v14l-4.400-4.300H1zM12 6.300q1.800 2.700 0 5.400M14.500 4q3.400 5 0 10M17 1.800q5 7.200 0 14.400" />
          </svg>
        </TrayIcon>
        <TrayIcon $gap={0} $rise={-2}>
          <svg width="21" height="17" viewBox="0 0 21 17">
            <path d="M7.500 4.500h8.500q2 0 2 2v6q0 2-2 2H7.500q-2 0-2-1.500V10" fill="none" stroke="#222" strokeWidth="1.400" />
            <path d="M8 12.500V9.500l2-3h3.500v6zM18.500 7.500h1q1 0 1 1v2q0 1-1 1h-1zM.5 3.500h7V6q0 2-2.200 2.600V12H2.700V8.600Q.5 8 .5 6zM1.500.5h1.400v3H1.500zM5 .5h1.400v3H5z" fill="#222" />
          </svg>
        </TrayIcon>
        <Clock>
          <Text $size={14.6} $track={-0.24}>09:29</Text>
          <Text $size={14.6} $track={-0.05}>23/03/2024</Text>
        </Clock>
        <NoticeCount>1</NoticeCount>
      </Tray>
    </Taskbar>
  );
}

export default function App() {
  return (
    <Screen>
      <GlobalStyle />
      <Browser />
      <NoticeBar>
        <NoticeText><Text $track={-0.25}>Restez informé. Activez les notifications de bureau.</Text></NoticeText>
        <NoticeButton><Text $size={14.6} $weight={600} $track={-0.32}>Activer</Text></NoticeButton>
        <Cross size={14} width={1.2} color="#424242" />
      </NoticeBar>
      <MeetingToolbar />
      <Body>
        <Stage>
          <SpeakerRing>
            <SpeakerAvatar>
              <svg width="118" height="134" viewBox="0 0 118 134" fill="none" stroke="#fff" strokeWidth="8.400">
                <circle cx="59" cy="34.500" r="29" />
                <path d="M17.500 80h83q12 0 12 12.500c0 21-20 37-53.500 37S5.500 113.500 5.500 92.500Q5.500 80 17.500 80z" />
              </svg>
            </SpeakerAvatar>
          </SpeakerRing>
          <SpeakerName><Text $size={14.6} $track={-0.34}>sabrine benzarti</Text></SpeakerName>
          <SelfTile><SelfAvatar>N</SelfAvatar></SelfTile>
        </Stage>
        <ChatPanel />
      </Body>
      <WindowsTaskbar />
    </Screen>
  );
}
